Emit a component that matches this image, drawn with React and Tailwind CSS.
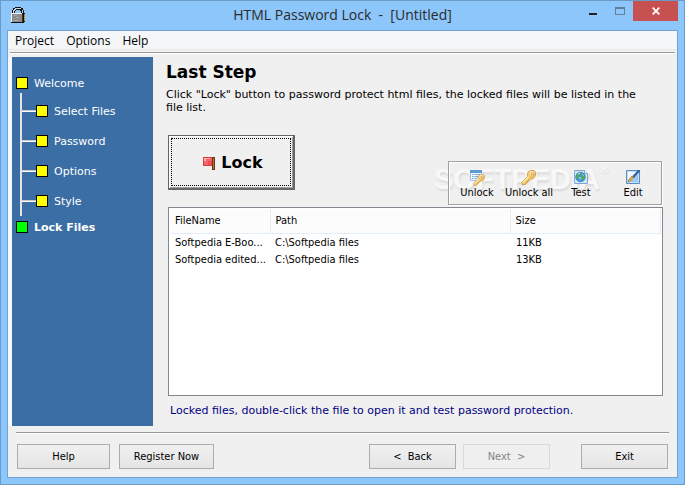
import React from "react";

const ui = "font-['Tahoma','DejaVu_Sans_Condensed','DejaVu_Sans',sans-serif]";
const segoe = "font-['Segoe_UI','Open_Sans','Noto_Sans',sans-serif]";

function PadlockIcon() {
  return (
    <svg width="14" height="16" viewBox="0 0 14 16" shapeRendering="crispEdges" aria-hidden="true">
      <path d="M4 0h6v1h2v2h1v4h-3V4H9V3H5v1H4v3H1V3h1V1h2z" fill="#111" />
      <path d="M4 1h6v1H5v1H4v1H3v3H2V3h1V2h1zM11 3h1v4h-1z" fill="#d4d4d4" />
      <path d="M0 6h14v9h-1v1H0z" fill="#111" />
      <path d="M1 7h10v8H1z" fill="#8b8b8b" />
      <path d="M0 6h11v1H1v8H0z" fill="#f4f4f4" />
      <path d="M11 7h1v8h-1z" fill="#5c1c14" />
      <path d="M13 7h1v7h-1z" fill="#a89a28" />
      <path d="M3 8h3v1H3zM5 10h3v1H5zM3 13h5v1H3z" fill="#a8a8a8" />
    </svg>
  );
}

function FlagIcon() {
  return (
    <svg width="12" height="13" viewBox="0 0 12 13" shapeRendering="crispEdges" aria-hidden="true">
      <path d="M0 0h10v9H0z" fill="#dc3c3c" />
      <path d="M1 1h8v7H1z" fill="#f0666a" />
      <path d="M1 1h6v1H3v2H1z" fill="#f9b4b2" />
      <path d="M5 4h4v4H5z" fill="#ec4c52" />
      <path d="M9 0h3v13H9z" fill="#6e3412" />
      <path d="M10 1h1v11h-1z" fill="#b8743c" />
    </svg>
  );
}

function KeyShape({ transform }) {
  return (
    <g transform={transform}>
      <path
        d="M6.500 2.200 9.500.5h3.200l1.500 2-.2 3.200-2.200 2.800-2.800.5-1.200 1.500-1.400.3-.2 1.500-1.500.5-.4 1.200-1.800.7H.5v-2.600l5.600-5.600-.2-2z"
        fill="#f5cf78"
        stroke="#cf9636"
        strokeWidth="0.900"
      />
      <path d="m1.500 12.500 5.600-5.700M7.500 3.200l2.500-1.500h2" stroke="#fdf0c4" strokeWidth="1.300" fill="none" />
      <path d="m3 13 6-5.800 2-.4 1.800-2" stroke="#e0a53c" strokeWidth="0.900" fill="none" />
      <circle cx="11" cy="3.800" r="1.100" fill="#fff" stroke="#b07c28" strokeWidth="0.600" />
    </g>
  );
}

function UnlockIcon() {
  return (
    <svg width="16" height="16" viewBox="0 0 16 16" aria-hidden="true">
      <path d="M1.500 1.500h11v9h-11z" fill="#eef6fe" stroke="#9cc2e6" />
      <path d="M1 0h12v3H1z" fill="#5c9ad6" />
      <path d="M3 4.500h1.500m1 0H11M3 6.500h1.500m1 0H10M3 8.500h1.500m1 0H8" stroke="#78abdc" />
      <KeyShape transform="translate(4.500 4) scale(.78 .78)" />
    </svg>
  );
}

function UnlockAllIcon() {
  return (
    <svg width="16" height="16" viewBox="0 0 16 16" aria-hidden="true">
      <KeyShape transform="translate(.5 0)" />
    </svg>
  );
}

function TestIcon() {
  return (
    <svg width="16" height="16" viewBox="0 0 16 16" aria-hidden="true">
      <path d="M1.500.5h10l3 3v10h-13z" fill="#d4e8fa" stroke="#80a8d2" />
      <path d="M11.500.5v3h3" fill="#fff" stroke="#80a8d2" />
      <circle cx="7.500" cy="7" r="4.800" fill="#4a98e2" stroke="#3c7cc0" strokeWidth="0.800" />
      <path d="M4 5l3-2.500 1.500 1-1 2-2 .5.500 2.500-1 1-1.500-2zM9 6l2.500-1 .3 3-2 2.500L8 9z" fill="#4caf42" />
      <path d="M5 4l2-1M9.500 4.500l1 1M6.500 7l1 2" stroke="#d0f0ff" />
    </svg>
  );
}

function EditIcon() {
  return (
    <svg width="16" height="16" viewBox="0 0 16 16" aria-hidden="true">
      <path d="M1.500.5h13v13h-13z" fill="#c4def8" stroke="#5c8cc0" />
      <path d="M3 2h8L3 10z" fill="#f4faff" />
      <path d="M5 12h8V5L8 9z" fill="#9cc8f0" />
      <path d="M14.500 0 8 7.500" stroke="#2c68a8" strokeWidth="2.400" />
      <path d="m8.500 7-2.500 3.500-3 1.500.8-2.500L7 6z" fill="#ecb850" stroke="#8a5f22" strokeWidth="0.600" />
    </svg>
  );
}

function Rule() {
  return <div className="h-[2px] border-t border-[#989898] bg-white" />;
}

function Box({ color }) {
  return <span className={`size-3 shrink-0 border border-black ${color}`} />;
}

function Branch({ label }) {
  return (
    <li className="flex h-[30px] items-center">
      <span className="h-[2px] w-[14px] border-t border-[#c8c8c8] bg-white" />
      <Box color="bg-[#ffff00]" />
      <a href="#step" className="ml-[6px] pt-[2px]">{label}</a>
    </li>
  );
}

function Steps() {
  return (
    <nav
      aria-label="Steps"
      className="w-[145px] shrink-0 border-l-4 border-[#f8f8f8] bg-[#3a6ea5] pt-5 pl-1 text-[11px] leading-3 text-white"
    >
      <div className="flex h-3 items-center">
        <Box color="bg-[#ffff00]" />
        <a href="#welcome" className="ml-[6px] pt-[2px]">Welcome</a>
      </div>
      <ul className="mt-1 ml-1 border-l-2 border-[#e4e4e4] pt-[3px]">
        {["Select Files", "Password", "Options", "Style"].map((s) => (
          <Branch key={s} label={s} />
        ))}
      </ul>
      <div className="mt-[5px] flex h-3 items-center font-bold">
        <Box color="bg-[#00ff00]" />
        <a href="#lock" className="ml-[6px] pt-[2px]">Lock Files</a>
      </div>
    </nav>
  );
}

function PushButton({ children, width, disabled }) {
  return (
    <button
      disabled={disabled}
      className={`h-[25px] border pt-px text-[11px] whitespace-pre ${ui} ${width} ${
        disabled
          ? "border-[#d9d9d9] bg-[#efefef] text-[#838383]"
          : "border-[#acacac] bg-linear-to-b from-[#f0f0f0] to-[#e5e5e5] text-black"
      }`}
    >
      {children}
    </button>
  );
}

function Tool({ icon, label }) {
  return (
    <button className="flex w-[52px] flex-col items-center whitespace-nowrap">
      {icon}
      <span className="leading-[14px]">{label}</span>
    </button>
  );
}

const files = [
  ["Softpedia E-Boo...", "C:\\Softpedia files", "11KB"],
  ["Softpedia edited...", "C:\\Softpedia files", "13KB"],
];

export default function App() {
  return (
    <div className="flex min-h-screen flex-col border border-[#6a9ac6] bg-[#8dc6fa] px-[6px] pb-[6px] font-['Verdana','DejaVu_Sans',sans-serif] text-black">
      <header className="flex h-[29px] items-start pl-1">
        <span className="w-[93px] pt-[6px]"><PadlockIcon /></span>
        <h1 className={`flex-1 pt-1 text-center text-[14px] leading-5 whitespace-pre text-[#2b2b2b] ${segoe}`}>
          {"HTML Password Lock  -  [Untitled]"}
        </h1>
        <div className="flex">
          <button aria-label="Minimize" className="flex h-5 w-[26px] items-center pt-[6px] pl-2">
            <span className="h-[2px] w-2 bg-[#222]" />
          </button>
          <button aria-label="Maximize" className="flex h-5 w-[26px] items-center justify-center">
            <span className="h-2 w-[10px] border border-t-2 border-[#5f7f9c]" />
          </button>
          <button aria-label="Close" className="flex h-5 w-[45px] items-center justify-center bg-[#c75050]">
            <svg width="8" height="8" viewBox="0 0 8 8" aria-hidden="true">
              <path d="M.7.7l6.600 6.600M7.300.7.7 7.300" stroke="#fff" strokeWidth="1.800" />
            </svg>
          </button>
        </div>
      </header>

      <div className="flex flex-1 flex-col border border-[#6fa3d2] bg-[#f0f0f0]">
        <nav aria-label="Menu" className={`flex h-[19px] items-center gap-3 border-b border-[#e8e8e8] bg-[#f5f6f7] pt-[2px] pl-[7px] text-[12px] ${segoe}`}>
          <button>Project</button>
          <button>Options</button>
          <button>Help</button>
        </nav>
        <div className="mx-[2px] mt-[2px]"><Rule /></div>

        <div className="mt-[3px] flex flex-1">
          <Steps />
          <main className="flex min-w-0 flex-1 flex-col pr-[14px] pl-[15px]">
            <div className="-ml-[2px] pt-[6px]">
              <h2 className="text-[17px] leading-[18px] font-bold">Last Step</h2>
              <p className="mt-[7px] pr-5 text-[11px] leading-[13px]">
                Click "Lock" button to password protect html files, the locked files will be listed in the file list.
              </p>
            </div>
            <div className="mt-[21px] flex items-start justify-between">
              <button className="flex h-[55px] w-[127px] border border-r-2 border-b-2 border-[#666] bg-[#f0f0f0] p-[2px] text-[16px] font-bold shadow-[inset_1px_1px_0_#fff,inset_-1px_-1px_0_#a0a0a0]">
                <span className="flex flex-1 items-center justify-center gap-[6px] self-stretch border border-dotted border-black pt-[2px] pl-1">
                  <FlagIcon />
                  Lock
                </span>
              </button>
              <div className="relative mt-[26px] mr-px">
                <span
                  aria-hidden="true"
                  className="pointer-events-none absolute top-0 -left-[14px] flex items-start font-['Liberation_Sans',sans-serif] text-[29px] leading-9 font-bold whitespace-nowrap text-[#f8f8f8] [text-shadow:1px_2px_2px_#dadada]"
                >
                  SOFTPEDIA
                  <span className="text-[12px] leading-4">®</span>
                </span>
                <div className={`relative flex h-11 w-[214px] items-start border border-[#a0a0a0] px-[2px] pt-2 text-[11px] shadow-[inset_1px_1px_0_#fff,1px_1px_0_#fff] ${ui}`}>
                  <Tool icon={<UnlockIcon />} label="Unlock" />
                  <Tool icon={<UnlockAllIcon />} label="Unlock all" />
                  <Tool icon={<TestIcon />} label="Test" />
                  <Tool icon={<EditIcon />} label="Edit" />
                </div>
              </div>
            </div>
            <div className="mt-[2px] min-h-[189px] flex-1 border border-[#828790] bg-white p-px">
              <table className={`w-full table-fixed text-left text-[11px] ${ui}`}>
                <colgroup>
                  <col className="w-[100px]" />
                  <col className="w-[240px]" />
                  <col />
                </colgroup>
                <thead>
                  <tr className="h-6 border-b border-[#e3edf8] bg-[#fcfcfc]">
                    <th className="border-r border-[#e3edf8] pt-px pl-[5px] font-normal">FileName</th>
                    <th className="border-r border-[#e3edf8] pt-px pl-[5px] font-normal">Path</th>
                    <th className="border-r border-[#e3edf8] pt-px pl-[5px] font-normal">Size</th>
                  </tr>
                </thead>
                <tbody>
                  {files.map(([name, path, size]) => (
                    <tr key={name} className="h-[17px] leading-[17px] whitespace-nowrap">
                      <td className="pl-[5px]">{name}</td>
                      <td className="pl-[5px]">{path}</td>
                      <td className="pl-[6px]">{size}</td>
                    </tr>
                  ))}
                </tbody>
              </table>
            </div>
            <p className="mt-[7px] mb-2 pl-[2px] text-[11px] leading-[15px] text-[#000080]">
              Locked files, double-click the file to open it and test password protection.
            </p>
          </main>
        </div>

        <div className="mt-[6px] mr-2 ml-2"><Rule /></div>
        <footer className="mt-[10px] mb-2 flex justify-between px-[9px]">
          <div className="flex gap-[9px]">
            <PushButton width="w-[93px]">Help</PushButton>
            <PushButton width="w-[95px]">Register Now</PushButton>
          </div>
          <div className="flex">
            <div className="mr-[31px] flex gap-[7px]">
              <PushButton width="w-[87px]">{"<  Back"}</PushButton>
              <PushButton width="w-[87px]" disabled>{"Next  >"}</PushButton>
            </div>
            <PushButton width="w-[87px]">Exit</PushButton>
          </div>
        </footer>
      </div>
    </div>
  );
}
